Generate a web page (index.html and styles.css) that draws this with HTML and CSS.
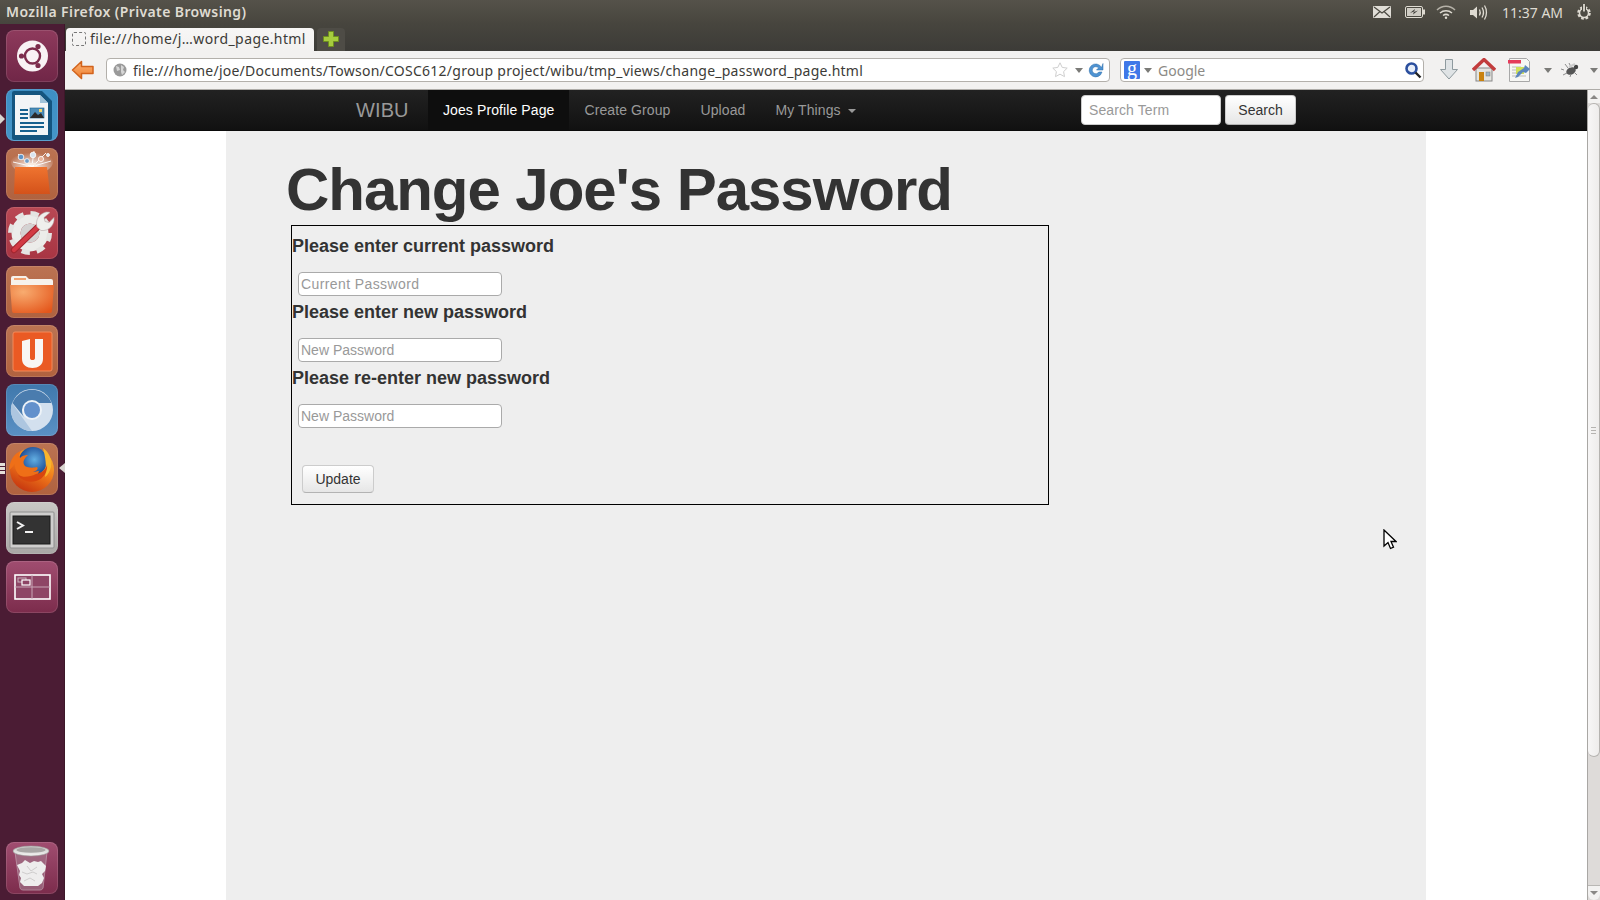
FILE: index.html
```html
<!DOCTYPE html>
<html lang="en">
<head>
<meta charset="utf-8">
<title>Change Joe's Password</title>
<link rel="stylesheet" href="styles.css">
</head>
<body>
<header class="panel">
  <span class="panel-title">Mozilla Firefox (Private Browsing)</span>
  <div class="tray">
    <svg class="t-mail" width="18" height="12" viewBox="0 0 18 12"><rect width="18" height="12" rx="1" fill="#e0ddd6"/><path d="M1 1l8 6 8-6M1 11l6-5.5M17 11l-6-5.5" fill="none" stroke="#4a4840" stroke-width="1.2"/></svg>
    <svg class="t-batt" width="20" height="12" viewBox="0 0 20 12"><rect x=".5" y=".5" width="17" height="11" rx="1.5" fill="#4a4840" stroke="#dfdbd2"/><rect x="18" y="3.500" width="2" height="5" fill="#dfdbd2"/><rect x="2" y="2" width="14" height="8" fill="#cfccc4"/><path d="M5 7l4-1.500-1 3 5-4-4 1.500 1-3z" fill="#3c3b37"/></svg>
    <svg class="t-wifi" width="20" height="14" viewBox="0 0 20 14"><g fill="none" stroke="#dfdbd2" stroke-width="1.5"><path d="M1 5c5-5 13-5 18 0" opacity=".7"/><path d="M4 8c3.500-3 8.500-3 12 0"/><path d="M7 10.500c2-1.500 4-1.500 6 0"/></g><circle cx="10" cy="12.800" r="1.200" fill="#dfdbd2"/></svg>
    <svg class="t-vol" width="19" height="17" viewBox="0 0 19 17"><path d="M1 6h3l4-3.500v12L4 11H1z" fill="#dfdbd2"/><g fill="none" stroke="#dfdbd2" stroke-width="1.300"><path d="M10.500 5.500c1 2 1 4 0 6"/><path d="M13 3.500c1.800 3 1.800 7 0 10"/><path d="M15.500 1.500c2.600 4 2.600 10 0 14"/></g></svg>
    <span class="clock">11:37 AM</span>
    <svg class="t-gear" width="18" height="18" viewBox="0 0 18 18"><circle cx="9" cy="10" r="5.500" fill="none" stroke="#dfdbd2" stroke-width="2.600" stroke-dasharray="2.600 1.700"/><circle cx="9" cy="10" r="4.500" fill="none" stroke="#dfdbd2" stroke-width="1.500"/><rect x="7" y="1" width="4" height="8" fill="#4a4840"/><rect x="8.100" y="1" width="1.800" height="7.500" fill="#dfdbd2"/></svg>
  </div>
</header>

<div class="desktop">
  <nav class="launcher">
    <div class="tile tile-maroon"><svg width="52" height="52" viewBox="0 0 52 52"><circle cx="26.500" cy="26" r="15.500" fill="#f8f2f4"/><circle cx="26.500" cy="26" r="7.500" fill="#f8f2f4" stroke="#7c2c4c" stroke-width="2.400"/><g fill="#7c2c4c"><circle cx="15.500" cy="26" r="2.600"/><circle cx="32" cy="16.500" r="2.600"/><circle cx="32" cy="35.500" r="2.600"/></g></svg></div>
    <div class="tile tile-blue"><svg width="52" height="52" viewBox="0 0 52 52"><path d="M8 2h28l10 10v37a2 2 0 0 1-2 2H8a2 2 0 0 1-2-2V4a2 2 0 0 1 2-2z" fill="#14557f"/><path d="M9 6h25l8 8v32H9z" fill="#f2f5f7"/><path d="M34 6l8 8h-8z" fill="#9fc3da"/><g fill="#17618f"><rect x="14" y="20" width="8" height="2"/><rect x="14" y="24" width="8" height="2"/><rect x="14" y="28" width="8" height="2"/><rect x="14" y="33" width="24" height="2"/><rect x="14" y="37" width="24" height="2"/><rect x="14" y="41" width="17" height="2"/></g><rect x="24" y="19" width="14" height="10" fill="#4d8db8" stroke="#17618f" stroke-width=".6"/><path d="M24 29l5-6 3 3 3-2 3 5z" fill="#2b2b2b"/><rect x="33" y="20" width="3" height="3" fill="#f1d56b"/></svg></div>
    <div class="tile tile-tan"><svg width="52" height="52" viewBox="0 0 52 52"><defs><radialGradient id="glow" cx=".5" cy=".7" r=".6"><stop offset="0" stop-color="#fff"/><stop offset="1" stop-color="#fff" stop-opacity="0"/></radialGradient><linearGradient id="bag" x1="0" y1="0" x2="0" y2="1"><stop offset="0" stop-color="#ef7430"/><stop offset="1" stop-color="#d4521a"/></linearGradient></defs><ellipse cx="26" cy="14" rx="21" ry="12" fill="url(#glow)"/><g stroke="#fff" stroke-width="1" opacity=".9"><path d="M25 18L12 6M26 18l2-15M27 18L40 5M24 18L7 14M28 18l17-5"/></g><g fill="#d9e4ef" stroke="#fff" stroke-width=".8"><circle cx="15" cy="9" r="2.800" fill="#5f94c6"/><circle cx="27" cy="7" r="2.800"/><circle cx="21" cy="13" r="2.400" fill="#6f9cc7"/><circle cx="35" cy="11" r="2.600" fill="#e9b49a"/><circle cx="42" cy="7" r="1.500"/></g><path d="M9 19h32l3 27H8z" fill="url(#bag)"/><path d="M21 19v-3h8v3" fill="none" stroke="#f9ebe0" stroke-width="1.800"/></svg></div>
    <div class="tile tile-red"><svg width="52" height="52" viewBox="0 0 52 52"><circle cx="24" cy="26" r="14" fill="none" stroke="#ececea" stroke-width="9"/><circle cx="24" cy="26" r="19.500" fill="none" stroke="#e4e4e2" stroke-width="5" stroke-dasharray="8.300 7"/><circle cx="24" cy="26" r="9.500" fill="#d4d2d2"/><path d="M8 43L36 16" stroke="#a3262f" stroke-width="6.400" stroke-linecap="round"/><path d="M8 43L36 16" stroke="#d23a44" stroke-width="4.200" stroke-linecap="round"/><path d="M31 20c-2-7 2-13 9-15 2 0 3 0 4 .5l-6 5 1 4 4 1 5-5c1 7-5 14-13 13z" fill="#efefed" stroke="#b9a6a8" stroke-width=".6"/></svg></div>
    <div class="tile tile-tan"><svg width="52" height="52" viewBox="0 0 52 52"><defs><radialGradient id="fold" cx=".3" cy=".25" r=".9"><stop offset="0" stop-color="#f8ac70"/><stop offset="1" stop-color="#e4561b"/></radialGradient></defs><path d="M5 12a2 2 0 0 1 2-2h13l3 3h22a2 2 0 0 1 2 2v5H5z" fill="#f6f2ec"/><rect x="8" y="12" width="12" height="2" fill="#f2a472"/><path d="M4 19h44l-2 26a2 2 0 0 1-2 2H8a2 2 0 0 1-2-2z" fill="url(#fold)"/></svg></div>
    <div class="tile tile-tan"><svg width="52" height="52" viewBox="0 0 52 52"><rect x="7" y="7" width="39" height="39" rx="2" fill="#ea5a24" stroke="#f38a5b"/><path d="M16 16l8-2v19c0 1.500 1 2 2.500 2s2.500-.5 2.500-2V14h8v20c0 6-5 9-10.500 9S16 40 16 34z" fill="#f8f6f4"/></svg></div>
    <div class="tile tile-chrome"><svg width="52" height="52" viewBox="0 0 52 52"><circle cx="26" cy="26" r="21" fill="#d3e0ee"/><path d="M6 19L26 47A21 21 0 0 1 6 19z" fill="#adc6e0"/><path d="M6.500 19a21 21 0 0 1 39 0H26a9 9 0 0 0-8 14z" fill="#4a7cae"/><circle cx="26" cy="26" r="10" fill="#eef3f8"/><circle cx="26" cy="26" r="8" fill="#6391cc"/></svg></div>
    <div class="tile tile-tan"><svg width="52" height="52" viewBox="0 0 52 52"><defs><radialGradient id="globe" cx=".55" cy=".45" r=".6"><stop offset="0" stop-color="#62aee2"/><stop offset="1" stop-color="#14408c"/></radialGradient><linearGradient id="fox" x1=".8" y1="0" x2=".3" y2="1"><stop offset="0" stop-color="#fbc02e"/><stop offset=".5" stop-color="#f0781a"/><stop offset="1" stop-color="#c5340f"/></linearGradient></defs><circle cx="26" cy="27" r="22" fill="url(#fox)"/><circle cx="27" cy="18" r="14" fill="url(#globe)"/><path d="M3 27C4 16 9 10 15 8c-2 3-2 5-1 7 3-3 6-3 8-3-4 4-6 7-3 11 3 2 9 2 12 1 2 2-1 4-4 5l6-1c-1 5-7 8-13 7-7-1-12-8-11-14-3 3-5 6-6 6z" fill="#ef6f17"/><path d="M37 5c6 4 9 11 8 19-1 4-3 8-6 10 1-7 2-14-2-29z" fill="#f9b42c"/><path d="M30 31c6-1 11-5 11-10 1 7-3 15-11 17-8 2-15-1-18-6 5 3 12 2 18-1z" fill="#d8460f"/></svg></div>
    <div class="tile tile-grey"><svg width="52" height="52" viewBox="0 0 52 52"><rect x="4" y="10" width="44" height="36" rx="1" fill="#cfcecd" stroke="#8e8e8e"/><rect x="7" y="14" width="37" height="28" fill="#333" stroke="#1a1a1a"/><path d="M11 20l6 3.500-6 3.500" fill="none" stroke="#f2f2f2" stroke-width="2"/><rect x="19" y="29" width="8" height="2" fill="#f2f2f2"/></svg></div>
    <div class="tile tile-maroon2"><svg width="52" height="52" viewBox="0 0 52 52"><rect x="9" y="14" width="35" height="24" fill="#8e4565" stroke="#fff" stroke-width="1.600"/><path d="M26 14v24M9 26h35" stroke="#c8a6b6" stroke-width="1"/><rect x="12" y="17" width="8" height="4" fill="none" stroke="#c9b3be"/><rect x="16" y="19" width="8" height="5" fill="#8e4565" stroke="#fff" stroke-width="1.200"/></svg></div>
    <div class="tile tile-maroon2 tile-trash"><svg width="52" height="52" viewBox="0 0 52 52"><defs><linearGradient id="rim" x1="0" y1="0" x2="0" y2="1"><stop offset="0" stop-color="#c9c9c7"/><stop offset="1" stop-color="#f2f2f1"/></linearGradient></defs><path d="M9 10l5 36a3 3 0 0 0 3 2h17a3 3 0 0 0 3-2l4-36z" fill="#a77f92" opacity=".6" stroke="#cdb9c4"/><path d="M11 23l5-2 3-3 5 3 4-2 4 1 3-1 5 5-1 5-3 3 2 4-2 5-4 3H18l-4-4 1-4-2-3 1-4z" fill="#eeeded"/><path d="M16 30l5 2 6-2 4 2M21 24l4 5 6-4M18 39l6-3 5 3" fill="none" stroke="#cfcdcd"/><ellipse cx="25" cy="9" rx="18" ry="5" fill="url(#rim)" stroke="#9c9c9a" stroke-width=".6"/><ellipse cx="25" cy="8" rx="14.500" ry="2.800" fill="#a8a6a5"/></svg></div>
    <span class="pip pip-writer"></span>
    <span class="pips-ff"><i></i><i></i><i></i></span>
    <span class="pip pip-ff"></span>
  </nav>

  <div class="browser">
    <div class="tabstrip">
      <div class="tab"><span class="favicon"></span><span class="tab-text">file:///home/j…word_page.html</span></div>
      <div class="newtab"><svg width="18" height="18" viewBox="0 0 18 18"><path d="M6.500 1.500h5v5h5v5h-5v5h-5v-5h-5v-5h5z" fill="#a6cc3e" stroke="#6e8f1f"/></svg></div>
    </div>

    <div class="toolbar">
      <svg class="back" width="24" height="20" viewBox="0 0 24 20"><defs><linearGradient id="arrow" x1="0" y1="0" x2="0" y2="1"><stop offset="0" stop-color="#fbb276"/><stop offset="1" stop-color="#ef7f2e"/></linearGradient></defs><path d="M10.500 1.500L1.500 10l9 8.500v-5h11.500v-7H10.500z" fill="url(#arrow)" stroke="#d2631c" stroke-width="1.500" stroke-linejoin="round"/></svg>
      <div class="urlbar">
        <svg class="globe" width="14" height="14" viewBox="0 0 14 14"><circle cx="7" cy="7" r="6.500" fill="#9a9a9a"/><path d="M3 3l3 1 1 3-3 1zM8 2l3 2-1 3 2 2-3 3-1-3z" fill="#d6d6d6"/></svg>
        <span class="url">file:///home/joe/Documents/Towson/COSC612/group project/wibu/tmp_views/change_password_page.html</span>
        <svg class="star" width="18" height="18" viewBox="0 0 18 18"><path d="M9 1.800l2.200 4.600 5 .7-3.600 3.500.9 5L9 13.200l-4.500 2.400.9-5L1.800 7.100l5-.7z" fill="#fff" stroke="#cfcfcf"/></svg>
        <i class="mini-caret"></i>
        <svg class="reload" width="16" height="16" viewBox="0 0 16 16"><path d="M13.500 5.500A6.500 6.500 0 1 0 14 10h-3.200A3.500 3.500 0 1 1 10.500 6L8.500 8H15V1.500z" fill="#4f93d2" stroke="#2f6ea8" stroke-width=".5"/></svg>
      </div>
      <div class="searchbar">
        <span class="g-badge">g</span>
        <i class="mini-caret"></i>
        <span class="search-hint">Google</span>
        <svg class="lens" width="18" height="18" viewBox="0 0 18 18"><circle cx="7.500" cy="7.500" r="5" fill="#e8eef8" stroke="#2b4f9e" stroke-width="2.600"/><path d="M11.500 11.500l5 5" stroke="#222" stroke-width="2.400"/></svg>
      </div>
      <div class="tools">
        <svg width="20" height="24" viewBox="0 0 20 24"><path d="M6.500 1.500h7v10h5L10 21 1.500 11.500h5z" fill="#dfe3e5" stroke="#8e9a9e"/></svg>
        <svg width="24" height="24" viewBox="0 0 24 24"><rect x="4" y="10" width="16" height="13" fill="#e4e4e0" stroke="#888"/><rect x="7" y="14" width="5" height="9" fill="#c9820f"/><rect x="14" y="14" width="4" height="4" fill="#9fb7c7" stroke="#777" stroke-width=".5"/><path d="M1 12L12 1.500 23 12" fill="none" stroke="#c23c3c" stroke-width="3.400"/></svg>
        <svg width="24" height="26" viewBox="0 0 24 26"><path d="M2.500 1.500h17l3 3v20h-20z" fill="#f7f7f4" stroke="#a8a8a8"/><rect x="1" y="3" width="13" height="3.500" fill="#e53b5a"/><path d="M5 10h9M5 13h6M5 16h6M5 19h14" stroke="#bbb"/><rect x="9" y="10" width="8" height="7" fill="#cfe05a"/><path d="M8 21l3-6 6-4 1-3 5 4-4 4-3-1-5 5z" fill="#5d86bb"/></svg>
        <i class="mini-caret tool-caret"></i>
        <svg class="bug" width="20" height="16" viewBox="0 0 20 16"><ellipse cx="10" cy="9" rx="5" ry="3.500" fill="#555" transform="rotate(-25 10 9)"/><circle cx="15" cy="5" r="2.200" fill="#444"/><g stroke="#8c8c8c" fill="none"><path d="M7 6L4 2M10 5L8 1M6 11l-4 2M10 12l-1 3M13 10l3 3M3 8l-3-1"/></g><path d="M8 5l6-3" stroke="#ccc" stroke-width="2"/></svg>
        <i class="mini-caret tool-caret"></i>
      </div>
    </div>

    <div class="viewport">
      <main class="page">
        <div class="navbar">
          <div class="nav-inner">
            <a class="brand">WIBU</a>
            <a class="nav-item active">Joes Profile Page</a>
            <a class="nav-item">Create Group</a>
            <a class="nav-item">Upload</a>
            <a class="nav-item">My Things<i class="caret"></i></a>
            <form class="nav-search">
              <input class="nav-input" placeholder="Search Term">
              <button class="btn nav-btn" type="button">Search</button>
            </form>
          </div>
        </div>
        <section class="content">
          <h1>Change Joe's Password</h1>
          <form class="pwd-box">
            <h4>Please enter current password</h4>
            <input class="pwd-input pwd-current" placeholder="Current Password">
            <h4>Please enter new password</h4>
            <input class="pwd-input" placeholder="New Password">
            <h4>Please re-enter new password</h4>
            <input class="pwd-input" placeholder="New Password">
            <button class="btn update" type="button">Update</button>
          </form>
        </section>
      </main>
      <aside class="scrollbar">
        <span class="arrow arrow-up"></span>
        <div class="thumb"><span class="grip"></span></div>
        <div class="track"></div>
        <span class="arrow arrow-down"></span>
      </aside>
    </div>
  </div>
</div>
<svg class="cursor" width="14" height="22" viewBox="0 0 14 22"><path d="M1 1v16l4-3.500 2.500 6 3-1.300-2.500-5.700h5z" fill="#fff" stroke="#000" stroke-width="1.300"/></svg>
</body>
</html>
```
FILE: styles.css
```css
* { box-sizing: border-box; }
html, body { margin: 0; height: 100%; overflow: hidden; }
body { width: 1600px; height: 900px; font-family: "Liberation Sans", Arial, sans-serif; font-size: 14px; color: #333; background: #fff; position: relative; }

/* top panel */
.panel { height: 24px; display: flex; align-items: center; padding-left: 6px; background: linear-gradient(#55524a, #47453e); }
.panel-title { font-family: "Noto Sans", sans-serif; font-weight: 600; font-size: 14px; letter-spacing: .39px; color: #dfdbd2; padding-bottom: 2px; }
.tray { margin-left: auto; display: flex; align-items: center; height: 24px; }
.t-mail { margin-right: 14px; }
.t-batt { margin-right: 11px; }
.t-wifi { margin-right: 13px; }
.t-vol { margin-right: 14px; }
.clock { font-family: "Noto Sans", sans-serif; font-size: 14px; color: #dfdbd2; width: 64px; }
.t-gear { margin: 0 7px 0 9px; }

.desktop { display: flex; height: 876px; }

/* launcher */
.launcher { width: 65px; flex: none; position: relative; display: flex; flex-direction: column; gap: 7px; padding: 6px 0 6px 6px; background: #4b1c34; border-right: 1px solid #3d1729; }
.tile { width: 52px; height: 52px; flex: none; border-radius: 8px; box-shadow: inset 0 0 0 1px rgba(255,255,255,.12); }
.tile svg { display: block; }
.tile-maroon { background: linear-gradient(#8e3a5c, #702647); }
.tile-maroon2 { background: linear-gradient(#a04d70, #7c2c4c); }
.tile-blue { background: linear-gradient(#3d8fc4, #4595c8); }
.tile-tan { background: linear-gradient(#bb7352, #b0623f); }
.tile-red { background: linear-gradient(#b94854, #a83543); }
.tile-chrome { background: linear-gradient(#3f78ac, #5a90c4); }
.tile-grey { background: linear-gradient(#c9c7c5, #a9a7a5); }
.tile-trash { margin-top: auto; }
.pip { position: absolute; width: 0; height: 0; border-style: solid; border-width: 5px 0 5px 5px; border-color: transparent transparent transparent #d9d5d0; }
.pip-writer { left: 0; top: 90px; }
.pip-ff { left: 59px; top: 439px; border-width: 5px 6px 5px 0; border-color: transparent #d9d5d0 transparent transparent; }
.pips-ff { position: absolute; left: 0; top: 439px; display: flex; flex-direction: column; gap: 1px; }
.pips-ff i { display: block; width: 5px; height: 3px; background: #e4e0da; }

.browser { flex: 1; min-width: 0; display: flex; flex-direction: column; }

/* tabs */
.tabstrip { height: 27px; flex: none; display: flex; align-items: flex-end; padding-left: 1px; background: linear-gradient(#47453e, #3c3b37); }
.tab { width: 248px; height: 23px; display: flex; align-items: center; padding: 0 0 2px 6px; background: linear-gradient(#f7f6f5, #f2f1f0); border-radius: 4px 4px 0 0; }
.favicon { width: 14px; height: 14px; border: 1px dashed #777; border-radius: 2px; margin-right: 4px; }
.tab-text { font-family: "Noto Sans", sans-serif; font-size: 14px; letter-spacing: .4px; color: #3c3b37; white-space: nowrap; }
.newtab { width: 28px; height: 23px; margin-left: 3px; padding-bottom: 2px; display: flex; align-items: center; justify-content: center; background: #4e4c46; border-radius: 4px 4px 0 0; }

/* toolbar */
.toolbar { height: 39px; flex: none; display: flex; align-items: center; background: #f2f1f0; border-bottom: 1px solid #aeaca8; padding-left: 6px; }
.back { flex: none; margin: 0 11px 0 0; }
.urlbar, .searchbar { height: 24px; display: flex; align-items: center; background: #fff; border: 1px solid #b3b0ab; border-radius: 4px; flex: none; }
.urlbar { width: 1004px; padding: 0 5px 0 6px; }
.globe { flex: none; margin-right: 6px; }
.url { font-family: "Noto Sans", sans-serif; font-size: 14px; letter-spacing: .25px; color: #3c3b37; white-space: nowrap; flex: 1; min-width: 0; }
.star { flex: none; margin-right: 6px; }
.reload { flex: none; margin-left: 5px; }
.mini-caret { flex: none; width: 0; height: 0; border-style: solid; border-width: 5px 4px 0; border-color: #7b7b78 transparent transparent; }
.searchbar { width: 304px; margin-left: 10px; padding: 0 1px 0 3px; }
.g-badge { width: 16px; height: 18px; flex: none; margin-right: 4px; background: #3f78e8; color: #fff; font-family: "Liberation Serif", serif; font-size: 20px; line-height: 14px; text-align: center; border-radius: 1px; }
.search-hint { font-family: "Noto Sans", sans-serif; font-size: 14px; color: #8c8a86; margin-left: 6px; flex: 1; }
.lens { flex: none; }
.tools { display: flex; align-items: center; margin-left: 15px; }
.tools svg:nth-child(1) { margin-right: 13px; }
.tools svg:nth-child(2) { margin-right: 11px; }
.tools svg:nth-child(3) { margin-right: 13px; }
.tool-caret { margin-right: 9px; }
.bug { margin-right: 9px; }

/* page */
.viewport { flex: 1; min-height: 0; display: flex; }
.page { flex: 1; min-width: 0; display: flex; flex-direction: column; background: #fff; }
.navbar { height: 41px; flex: none; background: linear-gradient(#222, #111); border-bottom: 1px solid #0a0a0a; }
.nav-inner { width: 1200px; height: 100%; margin: 0 auto; padding: 0 130px; display: flex; align-items: stretch; }
.brand { width: 52px; margin-right: 20px; font-size: 20px; line-height: 40px; letter-spacing: .1px; color: #999; }
.nav-item { display: flex; align-items: center; padding: 0 15px; letter-spacing: .1px; color: #999; }
.nav-item.active { color: #fff; background: #0e0e0e; }
.caret { width: 0; height: 0; margin-left: 7px; margin-top: 1px; border-style: solid; border-width: 4px 4px 0; border-color: #999 transparent transparent; }
.nav-search { margin-left: auto; display: flex; align-items: center; gap: 4px; }
.nav-input { width: 140px; height: 30px; padding: 0 7px; border: 1px solid #ccc; border-radius: 4px; background: #fff; font: 14px "Liberation Sans", Arial, sans-serif; letter-spacing: .1px; }
.nav-input::placeholder, .pwd-input::placeholder { color: #999; opacity: 1; }
.btn { border: 1px solid #ccc; border-bottom-color: #b3b3b3; border-radius: 4px; background: linear-gradient(#fff, #e6e6e6); color: #333; font: 14px "Liberation Sans", Arial, sans-serif; padding: 0; }
.nav-btn { width: 71px; height: 30px; }

.content { flex: 1; width: 1200px; margin: 0 auto; background: #eee; padding-left: 60px; }
h1 { margin: 0; padding-top: 28px; height: 94px; font-size: 60px; letter-spacing: -1.05px; line-height: 62px; font-weight: 700; color: #333; white-space: nowrap; }
.pwd-box { width: 758px; height: 280px; margin-left: 5px; border: 1px solid #000; padding: 9px 0 0 0; display: flex; flex-direction: column; align-items: flex-start; }
h4 { margin: 0 0 15px 0; font-size: 18px; line-height: 22px; font-weight: 700; color: #333; }
.pwd-input { width: 204px; height: 24px; margin: 0 0 5px 6px; padding: 0 2px; border: 1px solid #aaa; border-radius: 4px; background: #fff; font: 14px "Liberation Sans", Arial, sans-serif; }
.pwd-current { letter-spacing: .4px; }
.update { width: 72px; height: 28px; margin: 32px 0 0 10px; }

/* scrollbar */
.scrollbar { width: 13px; flex: none; display: flex; flex-direction: column; background: #dedbd9; border-left: 1px solid #a9a7a4; }
.arrow { height: 13px; flex: none; display: flex; align-items: center; justify-content: center; background: #f3f2f1; }
.arrow::after { content: ""; width: 0; height: 0; border-style: solid; }
.arrow-up::after { border-width: 0 4px 4px; border-color: transparent transparent #8a8886; }
.arrow-down { border-top: 1px solid #b9b7b4; border-radius: 0 0 6px 6px; height: 15px; }
.arrow-down::after { border-width: 4px 4px 0; border-color: #8a8886 transparent transparent; }
.thumb { height: 654px; flex: none; display: flex; align-items: center; justify-content: center; background: linear-gradient(90deg, #f7f6f6, #eeeceb); border: 1px solid #b5b3b0; border-left: 0; border-radius: 6px; }
.grip { width: 5px; height: 7px; background: repeating-linear-gradient(#b5b3b0 0 1px, transparent 1px 3px); }
.track { flex: 1; }

.cursor { position: absolute; left: 1383px; top: 529px; }
```
